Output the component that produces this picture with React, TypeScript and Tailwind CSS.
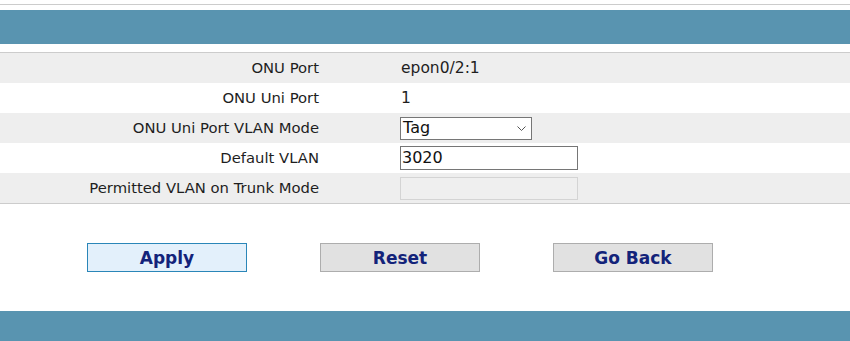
import React from 'react';

const rows = [
  { label: 'ONU Port', kind: 'text', value: 'epon0/2:1' },
  { label: 'ONU Uni Port', kind: 'text', value: '1' },
  { label: 'ONU Uni Port VLAN Mode', kind: 'select', value: 'Tag' },
  { label: 'Default VLAN', kind: 'input', value: '3020' },
  { label: 'Permitted VLAN on Trunk Mode', kind: 'disabled', value: '' },
];

const font = { fontFamily: '"DejaVu Sans", Verdana, sans-serif' };

const App: React.FC = () => {
  return (
    <div className="w-[850px] h-[341px] bg-white overflow-hidden flex flex-col" style={font}>
      <div className="mt-[4px] h-px bg-[#cccccc]" />
      <div className="mt-[5px] h-[34px] bg-[#5994b0]" />

      {/* settings table */}
      <div className="mt-[8px] border-t border-b border-[#cccccc]">
        {rows.map((row, i) => (
          <div
            key={row.label}
            className={`h-[30px] flex items-center ${i % 2 === 0 ? 'bg-[#eeeeee]' : 'bg-white'}`}
          >
            <div className="w-[319px] text-right text-[14.8px] text-[#1e1e1e] pt-px">{row.label}</div>
            <div className="ml-[81px] flex items-center">
              {row.kind === 'text' && (
                <span className="pl-px pt-px text-[15.5px] text-[#1e1e1e]">{row.value}</span>
              )}
              {row.kind === 'select' && (
                <div className="w-[132px] h-[23px] border border-[#767676] bg-white flex items-center justify-between pl-[2px] pr-[5px] text-[16px] text-[#111111]">
                  <span>{row.value}</span>
                  <svg width="9" height="5" viewBox="0 0 9 5" fill="none">
                    <path d="M0.5 0.5L4.5 4.5L8.5 0.5" stroke="#555555" strokeWidth="1" />
                  </svg>
                </div>
              )}
              {row.kind === 'input' && (
                <input
                  readOnly
                  value={row.value}
                  className="w-[178px] h-[24px] border border-[#767676] bg-white px-[1px] text-[16px] text-[#111111] outline-none"
                  style={font}
                />
              )}
              {row.kind === 'disabled' && (
                <div className="w-[178px] h-[23px] border border-[#d4d4d4] bg-[#efefef]" />
              )}
            </div>
          </div>
        ))}
      </div>

      {/* actions */}
      <div className="mt-[39px] flex pl-[87px] gap-[73px]">
        <button className="w-[160px] h-[29px] border border-[#2a86b8] bg-[#e3f0fb] pt-px text-[17px] font-bold text-[#13237a] leading-none">
          Apply
        </button>
        <button className="w-[160px] h-[29px] border border-[#adadad] bg-[#e1e1e1] pt-px text-[17px] font-bold text-[#13237a] leading-none">
          Reset
        </button>
        <button className="w-[160px] h-[29px] border border-[#adadad] bg-[#e1e1e1] pt-px text-[17px] font-bold text-[#13237a] leading-none">
          Go Back
        </button>
      </div>

      <div className="mt-auto h-[30px] bg-[#5994b0]" />
    </div>
  );
};

export default App;
